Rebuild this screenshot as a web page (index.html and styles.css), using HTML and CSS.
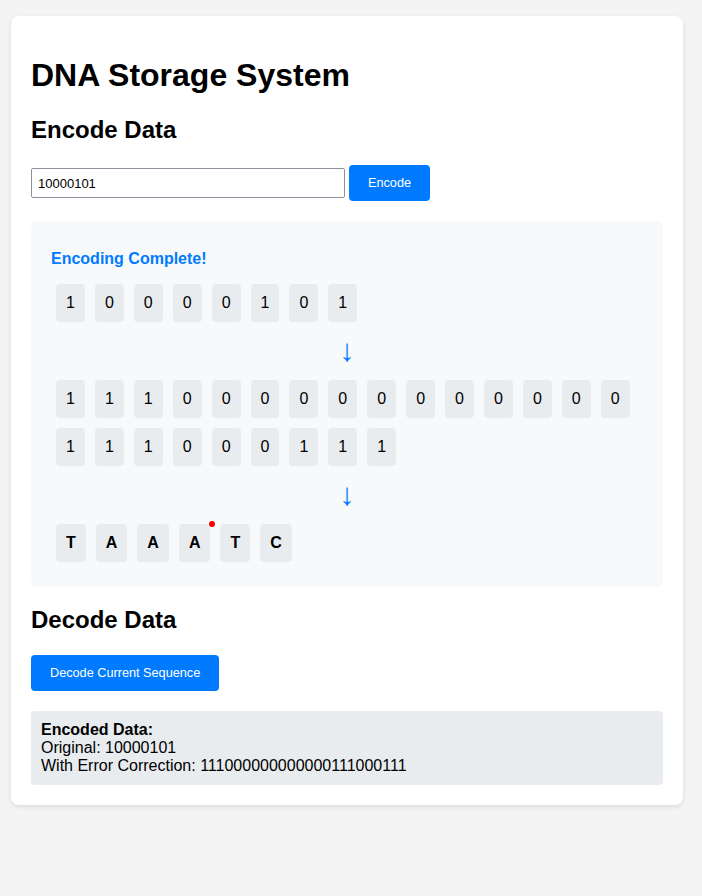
FILE: index.html
```html
<!DOCTYPE html>
<html lang="en">
<head>
<meta charset="utf-8">
<title>DNA Storage System</title>
<link rel="stylesheet" href="styles.css">
</head>
<body>
<div class="card">
  <h1 class="title">DNA Storage System</h1>

  <h2 class="section-title">Encode Data</h2>
  <div class="encode-row">
    <input class="bits-input" type="text" value="10000101">
    <button class="btn">Encode</button>
  </div>

  <div class="result">
    <h3 class="result-title">Encoding Complete!</h3>
    <div class="seq">
      <span class="cell">1</span><span class="cell">0</span><span class="cell">0</span><span class="cell">0</span><span class="cell">0</span><span class="cell">1</span><span class="cell">0</span><span class="cell">1</span>
    </div>
    <div class="arrow">↓</div>
    <div class="seq">
      <span class="cell">1</span><span class="cell">1</span><span class="cell">1</span><span class="cell">0</span><span class="cell">0</span><span class="cell">0</span><span class="cell">0</span><span class="cell">0</span><span class="cell">0</span><span class="cell">0</span><span class="cell">0</span><span class="cell">0</span><span class="cell">0</span><span class="cell">0</span><span class="cell">0</span>
      <span class="cell">1</span><span class="cell">1</span><span class="cell">1</span><span class="cell">0</span><span class="cell">0</span><span class="cell">0</span><span class="cell">1</span><span class="cell">1</span><span class="cell">1</span>
    </div>
    <div class="arrow">↓</div>
    <div class="seq">
      <span class="cell base">T</span><span class="cell base">A</span><span class="cell base">A</span><span class="cell base error">A</span><span class="cell base">T</span><span class="cell base">C</span>
    </div>
  </div>

  <h2 class="section-title">Decode Data</h2>
  <button class="btn">Decode Current Sequence</button>

  <div class="info">
    <strong>Encoded Data:</strong><br>
    Original: 10000101<br>
    With Error Correction: 111000000000000111000111
  </div>
</div>
</body>
</html>
```

FILE: styles.css
```css
html, body {
  margin: 0;
  background: #f4f4f4;
}

body {
  padding: 16px 19px 16px 11px;
  font-family: "Liberation Sans", Arial, sans-serif;
  color: #000;
}

.card {
  background: #fff;
  border-radius: 8px;
  padding: 20px;
  box-shadow: 0 2px 5px rgba(0, 0, 0, 0.1);
}

.title {
  font-size: 32px;
  font-weight: bold;
  margin: 21px 0 22px;
}

.section-title {
  font-size: 24px;
  font-weight: bold;
  margin: 19px 0 21px;
}

.encode-row {
  display: flex;
  align-items: center;
  gap: 4px;
}

.bits-input {
  box-sizing: border-box;
  width: 314px;
  height: 30px;
  padding: 0 6px;
  border: 1px solid #8f8f9d;
  border-radius: 2px;
  font-family: "Liberation Sans", Arial, sans-serif;
  font-size: 13px;
  color: #000;
  background: #fff;
}

.btn {
  background: #007bff;
  color: #fff;
  border: none;
  border-radius: 4px;
  padding: 10px 19px;
  height: 36px;
  font-family: "Liberation Sans", Arial, sans-serif;
  font-size: 12.7px;
}

.result {
  margin-top: 20px;
  background: #f8f9fa;
  border-radius: 6px;
  padding: 20px;
}

.result-title {
  color: #007bff;
  font-size: 16px;
  font-weight: bold;
  margin: 9px 0 11px;
}

.seq {
  display: flex;
  flex-wrap: wrap;
}

.cell {
  position: relative;
  display: block;
  margin: 5px;
  padding: 10px;
  background: #e9ecef;
  border-radius: 4px;
  font-size: 16px;
  line-height: 18px;
}

.base {
  font-weight: bold;
}

.error::after {
  content: "";
  position: absolute;
  top: -3px;
  right: -5px;
  width: 6px;
  height: 6px;
  border-radius: 50%;
  background: #ff0000;
}

.arrow {
  text-align: center;
  color: #007bff;
  font-size: 31px;
  line-height: 28px;
  margin: 10px 0;
}

.info {
  margin-top: 20px;
  background: #e9ecef;
  border-radius: 4px;
  padding: 10px;
  font-size: 16px;
  line-height: 18px;
}
```
